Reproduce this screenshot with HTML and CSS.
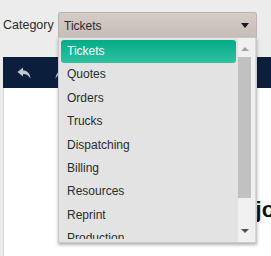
FILE: index.html
```html
<!DOCTYPE html>
<html lang="en">
<head>
  <meta charset="UTF-8">
  <meta name="viewport" content="width=device-width, initial-scale=1.0">
  <title>Category</title>
  <link rel="stylesheet" href="styles.css">
</head>
<body>
  <div class="filter-row">
    <label class="field-label">Category</label>
    <div class="select">
      <span class="select-value">Tickets</span>
      <span class="caret"></span>

      <div class="dropdown">
        <div class="dropdown-list">
          <ul class="options">
            <li class="option selected">Tickets</li>
            <li class="option">Quotes</li>
            <li class="option">Orders</li>
            <li class="option">Trucks</li>
            <li class="option">Dispatching</li>
            <li class="option">Billing</li>
            <li class="option">Resources</li>
            <li class="option">Reprint</li>
            <li class="option">Production</li>
          </ul>
        </div>
        <div class="scrollbar">
          <span class="arrow-up"></span>
          <span class="thumb"></span>
          <span class="arrow-down"></span>
        </div>
      </div>
    </div>
  </div>

  <div class="panel">
    <div class="panel-bar">
      <!-- undo / redo -->
      <svg class="bar-icon" width="14" height="12" viewBox="0 0 14 12">
        <path d="M6 0.5 L0.5 5 L6 9.5 V7 C9.5 7 11.5 8.2 13.5 11.5 C13 6.5 10.5 3.5 6 3.2 Z" fill="#c3c8d0"/>
      </svg>
      <svg class="bar-icon" width="14" height="12" viewBox="0 0 14 12">
        <path d="M8 0.5 L13.5 5 L8 9.5 V7 C4.5 7 2.5 8.2 0.5 11.5 C1 6.5 3.5 3.5 8 3.2 Z" fill="#c3c8d0"/>
      </svg>
    </div>
    <div class="panel-body">
      <h1 class="panel-title">Major</h1>
    </div>
  </div>
</body>
</html>
```

FILE: styles.css
```css
body {
  font-family: "Liberation Sans", Arial, sans-serif;
  margin: 0;
  padding: 0;
  background-color: #ececec;
  color: #333;
  overflow: hidden;
}

.filter-row {
  display: flex;
  align-items: center;
  gap: 5px;
  padding: 12px 0 0 3px;
}

.field-label {
  width: 50px;
  font-size: 12.5px;
  color: #2b2b2b;
}

.select {
  position: relative;
  box-sizing: border-box;
  width: 199px;
  height: 25px;
  display: flex;
  align-items: center;
  justify-content: space-between;
  padding: 0 7px 0 5px;
  border: 1px solid #bdb4af;
  border-bottom: none;
  border-radius: 3px 3px 0 0;
  background: linear-gradient(#d4ccc7, #c7beb9);
  z-index: 10;
}

.select-value {
  font-size: 12px;
  color: #2b2b2b;
  padding-top: 1px;
}

.caret {
  width: 0;
  height: 0;
  border-left: 4px solid transparent;
  border-right: 4px solid transparent;
  border-top: 5px solid #1a1a1a;
}

.dropdown {
  position: absolute;
  top: 100%;
  left: -1px;
  box-sizing: border-box;
  width: 199px;
  height: 206px;
  display: flex;
  border: 1px solid #c9c9c9;
  background-color: #e3e3e3;
  box-shadow: 0 2px 3px rgba(0, 0, 0, 0.3);
}

.dropdown-list {
  flex: 1;
  padding: 2px 2px 3px 2px;
}

.options {
  list-style: none;
  margin: 0;
  padding: 0;
  height: 100%;
  overflow: hidden;
}

.option {
  height: 23.4px;
  line-height: 23.4px;
  padding-left: 6px;
  font-size: 12px;
  color: #2b2b2b;
}

.option.selected {
  height: 23px;
  line-height: 23px;
  margin-bottom: 0.4px;
  border-radius: 3px;
  color: white;
  background: linear-gradient(#04ab87, #2fc2a1);
}

.scrollbar {
  position: relative;
  width: 17px;
  background-color: #f0f0f0;
  border-right: 1px solid #d8d8d8;
}

.thumb {
  position: absolute;
  top: 19px;
  left: 0;
  width: 13px;
  height: 141px;
  background-color: #c1c1c1;
}

.arrow-up,
.arrow-down {
  position: absolute;
  left: 3px;
  width: 0;
  height: 0;
  border-left: 4px solid transparent;
  border-right: 4px solid transparent;
}

.arrow-up {
  top: 9px;
  border-bottom: 4px solid #a3a3a3;
}

.arrow-down {
  top: 191px;
  border-top: 4px solid #505050;
}

.panel {
  margin: 20px 0 0 3px;
}

.panel-bar {
  display: flex;
  align-items: center;
  gap: 24px;
  height: 31px;
  padding-left: 14px;
  background-color: #0b1f3d;
}

.panel-body {
  height: 168px;
  border-left: 1px solid #d6d6d6;
  background-color: white;
  overflow: hidden;
}

.panel-title {
  margin: 109px 0 0 221px;
  font-size: 22px;
  line-height: 26px;
  font-weight: bold;
  color: #111;
  white-space: nowrap;
}
```
